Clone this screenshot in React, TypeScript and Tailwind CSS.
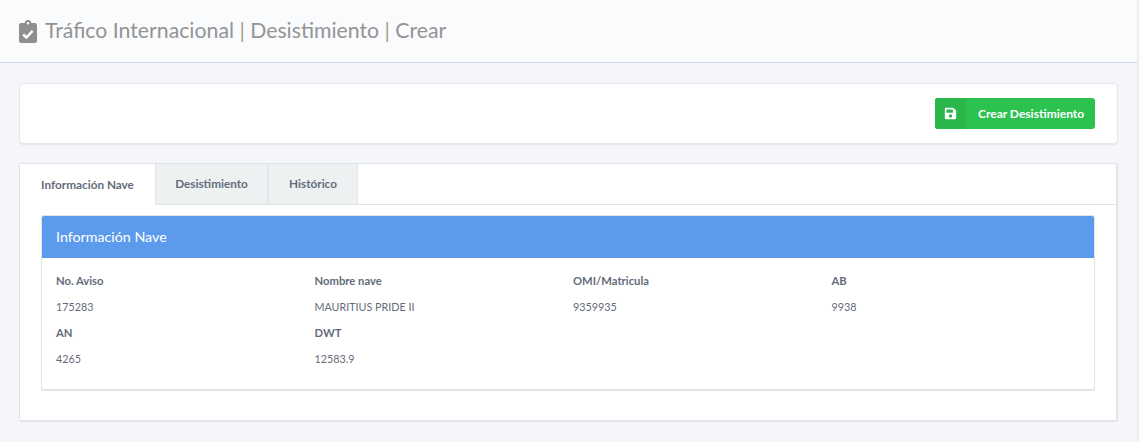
import { FaSave } from "react-icons/fa";

const font = { fontFamily: '"Lato", "Noto Sans", sans-serif' };

const fields = [
  { label: "No. Aviso", value: "175283" },
  { label: "Nombre nave", value: "MAURITIUS PRIDE II" },
  { label: "OMI/Matricula", value: "9359935" },
  { label: "AB", value: "9938" },
  { label: "AN", value: "4265" },
  { label: "DWT", value: "12583.9" },
];

function ClipboardCheck() {
  return (
    <svg width="18" height="23" viewBox="0 0 18 23" className="shrink-0">
      <path
        fill="#8f8f8f"
        d="M2 3h3.6C5.9 1.3 7.3 0 9 0s3.1 1.3 3.4 3H16a2 2 0 0 1 2 2v16a2 2 0 0 1-2 2H2a2 2 0 0 1-2-2V5a2 2 0 0 1 2-2z"
      />
      <circle cx="9" cy="3.2" r="1.2" fill="#f9fafc" />
      <path d="M4.2 14.5l3.2 3 6.2-6.6" fill="none" stroke="#fff" strokeWidth="2.4" />
    </svg>
  );
}

export default function App() {
  return (
    <div className="h-[442px] w-[1140px] overflow-hidden bg-[#f4f6fa] text-[#646c7a]" style={font}>
      <div className="h-[442px] w-[1138px] border-r border-[#e6e8ec]">
        {/* Title bar */}
        <div className="flex h-[63px] items-center gap-[8px] border-b border-[#d3dde9] bg-[#f9fbfd] pl-[19px]">
          <ClipboardCheck />
          <h1 className="text-[21.25px] leading-none font-normal text-[#949494]">
            Tráfico Internacional <span className="text-[#a89f86]">|</span> Desistimiento{" "}
            <span className="text-[#a89f86]">|</span> Crear
          </h1>
        </div>

        <div className="flex w-[1137px] flex-col gap-[19px] px-[19px] pt-[20px]">
          {/* Action bar */}
          <div className="flex h-[61px] items-center justify-end rounded-[4px] border border-[#e4e6eb] bg-white pr-[22px] shadow-[0_1px_1px_rgba(0,0,0,0.06)]">
            <button className="flex h-[31px] w-[160px] items-center overflow-hidden rounded-[3px] bg-[#2bc24f] text-[12px] font-bold text-white">
              <span className="flex h-full w-[31px] items-center justify-center bg-[#29b64b]">
                <FaSave size={13} />
              </span>
              <span className="flex-1 pl-[12px] text-left">Crear Desistimiento</span>
            </button>
          </div>

          {/* Tabs card */}
          <div className="h-[259px] rounded-[3px] border border-r-2 border-b-2 border-[#e1e5ea] bg-white">
            <div className="flex h-[41px] border-b border-[#e1e5ea] text-[11.75px] font-bold">
              <div className="-mb-px flex w-[136px] items-center justify-center border-r border-[#e1e5ea] bg-white">
                Información Nave
              </div>
              <div className="flex w-[113px] items-center justify-center border-r-2 border-[#e1e8e9] bg-[#edf1f2]">
                Desistimiento
              </div>
              <div className="flex w-[89px] items-center justify-center border-r border-[#e1e8e9] bg-[#edf1f2]">
                Histórico
              </div>
            </div>

            <div className="px-[21px] pt-[10px]">
              {/* Inner panel */}
              <div className="h-[176px] overflow-hidden rounded-[3px] border border-b-2 border-[#e1e3e6] bg-white">
                <div className="flex h-[42px] items-center bg-[#5c9bec] pl-[14px] text-[14.25px] text-white">
                  Información Nave
                </div>
                <div className="grid grid-cols-4 gap-y-[10px] pt-[15px] pr-[4px] pl-[14px]">
                  {fields.map((f) => (
                    <div key={f.label} className="flex flex-col gap-[10px]">
                      <span className="h-[16px] text-[11.25px] leading-[16px] font-bold">{f.label}</span>
                      <span className="h-[16px] text-[10.75px] leading-[16px]">{f.value}</span>
                    </div>
                  ))}
                </div>
              </div>
            </div>
          </div>
        </div>
      </div>
    </div>
  );
}
